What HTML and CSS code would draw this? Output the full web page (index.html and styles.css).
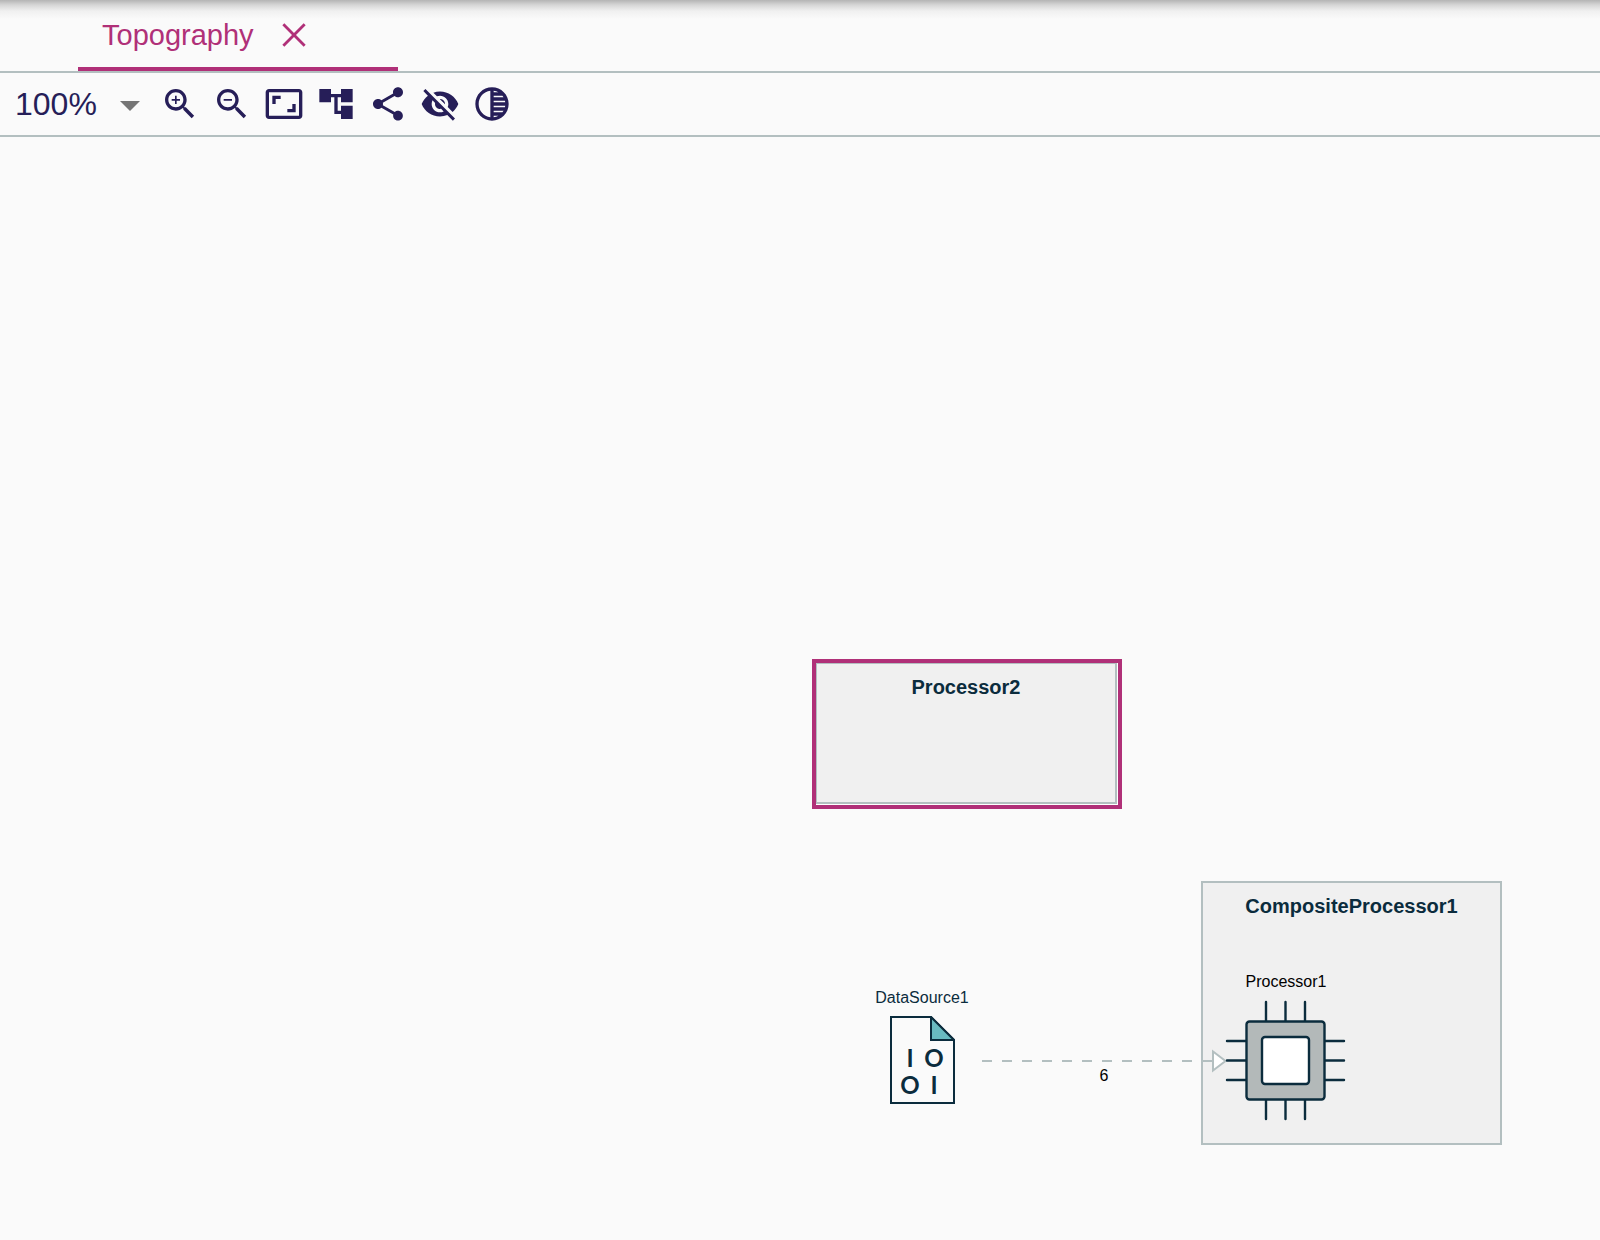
FILE: index.html
```html
<!DOCTYPE html>
<html lang="en">
<head>
  <meta charset="utf-8">
  <title>Topography</title>
  <link rel="stylesheet" href="styles.css">
</head>
<body>
  <div class="workbench">
    <header class="tabs">
      <div class="tab">
        <a class="tab-label" href="#canvas">Topography</a>
        <button class="tab-close" type="button" aria-label="Close tab">
          <svg class="icon" viewBox="0 0 24 24"><path d="M19 6.2 17.8 5 12 10.8 6.2 5 5 6.2 10.8 12 5 17.8 6.2 19 12 13.2 17.8 19 19 17.8 13.2 12z"/></svg>
        </button>
      </div>
    </header>

    <nav class="toolbar" aria-label="Diagram tools">
      <div class="zoom">
        <select class="zoom-select" aria-label="Zoom level">
          <option>50%</option>
          <option selected>100%</option>
          <option>200%</option>
        </select>
        <svg class="zoom-arrow" viewBox="0 0 20 10"><path d="M0 0l10 10L20 0z"/></svg>
      </div>
      <button class="tool" type="button" aria-label="Zoom in">
        <svg class="icon" viewBox="0 0 24 24"><path d="M15.5 14h-.79l-.28-.27C15.41 12.59 16 11.11 16 9.5 16 5.91 13.09 3 9.5 3S3 5.91 3 9.5 5.91 16 9.5 16c1.61 0 3.09-.59 4.23-1.57l.27.28v.79l5 4.99L20.49 19l-4.99-5zm-6 0C7.01 14 5 11.99 5 9.5S7.01 5 9.5 5 14 7.01 14 9.5 11.99 14 9.5 14zm2.5-4h-2v2H9v-2H7V9h2V7h1v2h2v1z"/></svg>
      </button>
      <button class="tool" type="button" aria-label="Zoom out">
        <svg class="icon" viewBox="0 0 24 24"><path d="M15.5 14h-.79l-.28-.27C15.41 12.59 16 11.11 16 9.5 16 5.91 13.09 3 9.5 3S3 5.91 3 9.5 5.91 16 9.5 16c1.61 0 3.09-.59 4.23-1.57l.27.28v.79l5 4.99L20.49 19l-4.99-5zm-6 0C7.01 14 5 11.99 5 9.5S7.01 5 9.5 5 14 7.01 14 9.5 11.99 14 9.5 14zM7 9h5v1H7z"/></svg>
      </button>
      <button class="tool" type="button" aria-label="Fit to screen">
        <svg class="icon" viewBox="0 0 24 24"><path d="M19 12h-2v3h-3v2h5v-5zM7 9h3V7H5v5h2V9zm14-6H3c-1.1 0-2 .9-2 2v14c0 1.1.9 2 2 2h18c1.1 0 2-.9 2-2V5c0-1.1-.9-2-2-2zm0 16.01H3V4.99h18v14.02z"/></svg>
      </button>
      <button class="tool" type="button" aria-label="Arrange all">
        <svg class="icon" viewBox="0 0 24 24"><path d="M22 11V3h-7v3H9V3H2v8h7V8h2v10h4v3h7v-8h-7v3h-2V8h2v3z"/></svg>
      </button>
      <button class="tool" type="button" aria-label="Share">
        <svg class="icon" viewBox="0 0 24 24"><path d="M18 16.08c-.76 0-1.44.3-1.96.77L8.91 12.7c.05-.23.09-.46.09-.7s-.04-.47-.09-.7l7.05-4.11c.54.5 1.25.81 2.04.81 1.66 0 3-1.34 3-3s-1.34-3-3-3-3 1.34-3 3c0 .24.04.47.09.7L8.04 9.81C7.5 9.31 6.79 9 6 9c-1.66 0-3 1.34-3 3s1.34 3 3 3c.79 0 1.5-.31 2.04-.81l7.12 4.16c-.05.21-.08.43-.08.65 0 1.61 1.31 2.92 2.92 2.92 1.61 0 2.92-1.31 2.92-2.92s-1.31-2.92-2.92-2.92z"/></svg>
      </button>
      <button class="tool" type="button" aria-label="Reveal hidden elements">
        <svg class="icon" viewBox="0 0 24 24"><path d="M12 7c2.76 0 5 2.24 5 5 0 .65-.13 1.26-.36 1.83l2.92 2.92c1.51-1.26 2.7-2.89 3.43-4.75-1.73-4.39-6-7.5-11-7.5-1.4 0-2.74.25-3.98.7l2.16 2.16C10.74 7.13 11.35 7 12 7zM2 4.27l2.28 2.28.46.46C3.08 8.3 1.78 10.02 1 12c1.73 4.39 6 7.5 11 7.5 1.55 0 3.03-.3 4.38-.84l.42.42L19.73 22 21 20.73 3.27 3 2 4.27zM7.53 9.8l1.55 1.55c-.05.21-.08.43-.08.65 0 1.66 1.34 3 3 3 .22 0 .44-.03.65-.08l1.55 1.55c-.67.33-1.41.53-2.2.53-2.76 0-5-2.24-5-5 0-.79.2-1.53.53-2.2zm4.31-.78l3.15 3.15.02-.16c0-1.66-1.34-3-3-3l-.17.01z"/></svg>
      </button>
      <button class="tool" type="button" aria-label="Reveal faded elements">
        <svg class="icon" viewBox="0 0 24 24"><path d="M12 2C6.48 2 2 6.48 2 12s4.48 10 10 10 10-4.48 10-10S17.52 2 12 2zm-1 17.93c-3.94-.49-7-3.85-7-7.93s3.05-7.44 7-7.93v15.86zm2-15.86c1.03.13 2 .45 2.87.93H13v-.93zM13 7h5.24c.25.31.48.65.68 1H13V7zm0 3h6.74c.08.33.15.66.19 1H13v-1zm0 9.93V19h2.87c-.87.48-1.84.8-2.87.93zM18.24 17H13v-1h5.92c-.2.35-.43.69-.68 1zm1.5-3H13v-1h6.93c-.04.34-.11.67-.19 1z"/></svg>
      </button>
    </nav>

    <main class="canvas" id="canvas">
      <section class="node processor2">
        <div class="processor2-body">
          <h2 class="container-title">Processor2</h2>
        </div>
      </section>

      <section class="node composite">
        <h2 class="container-title">CompositeProcessor1</h2>
      </section>

      <section class="node data-source">
        <span class="node-label">DataSource1</span>
        <svg class="file" viewBox="0 0 66 90">
          <path class="file-sheet" d="M2 1h40l23 23v63H2z"/>
          <path class="file-fold" d="M42 1v23h23z"/>
          <g class="file-bits">
            <text x="21" y="51">I</text>
            <text x="45" y="51">O</text>
            <text x="21" y="78">O</text>
            <text x="45" y="78">I</text>
          </g>
        </svg>
      </section>

      <div class="node edge">
        <svg class="edge-line" viewBox="0 0 246 24">
          <path d="M0 12h230" stroke-dasharray="10 10"/>
          <path class="edge-head" d="M231 2.500v19l12.500-9.500z"/>
        </svg>
        <span class="edge-label">6</span>
      </div>

      <section class="node processor1">
        <span class="node-label inner-label">Processor1</span>
        <svg class="chip" viewBox="0 0 122 122">
          <path class="chip-pins" d="M41 2v117M60.500 2v117M80 2v117M2 41h117M2 60.500h117M2 80h117"/>
          <rect class="chip-body" x="21.500" y="21.500" width="78" height="78" rx="3"/>
          <rect class="chip-core" x="37" y="37" width="47" height="47" rx="3"/>
        </svg>
      </section>
    </main>
  </div>
</body>
</html>
```
FILE: styles.css
```css
:root {
  --accent: #b03078;
  --navy: #261e58;
  --ink: #0b2c3d;
  --line: #b3bfc0;
  --surface: #fafafa;
  --container: #f0f0f0;
}

* {
  box-sizing: border-box;
}

body {
  margin: 0;
  background: var(--surface);
  font-family: "Liberation Sans", Arial, sans-serif;
}

svg {
  display: block;
}

.workbench {
  display: flex;
  flex-direction: column;
  min-height: 100vh;
}

.tabs {
  display: flex;
  padding-left: 78px;
  border-bottom: 2px solid var(--line);
  background: linear-gradient(#b4b4b4, #d6d6d6 5px, #f0f0f0 11px, var(--surface) 19px);
}

.tab {
  display: flex;
  align-items: center;
  gap: 20px;
  width: 320px;
  height: 71px;
  padding: 2px 0 0 24px;
  border-bottom: 4px solid var(--accent);
}

.tab-label {
  color: var(--accent);
  font-size: 29px;
  line-height: 32px;
  text-decoration: none;
}

.tab-close,
.tool {
  padding: 0;
  border: 0;
  background: none;
  cursor: pointer;
}

.tab-close {
  color: var(--accent);
}

.tool {
  color: var(--navy);
}

.icon {
  width: 40px;
  height: 40px;
  fill: currentColor;
}

.toolbar {
  display: flex;
  align-items: center;
  gap: 12px;
  height: 64px;
  padding-left: 15px;
  border-bottom: 2px solid var(--line);
}

.zoom {
  display: grid;
  align-items: center;
  width: 133px;
}

.zoom-select {
  grid-area: 1 / 1;
  appearance: none;
  width: 100%;
  padding: 0;
  border: 0;
  background: none;
  color: var(--navy);
  font: 32px/40px "Liberation Sans", Arial, sans-serif;
}

.zoom-arrow {
  grid-area: 1 / 1;
  justify-self: end;
  width: 20px;
  height: 10px;
  margin: 4px 8px 0 0;
  fill: #757575;
  pointer-events: none;
}

.canvas {
  position: relative;
  flex: 1;
  overflow: hidden;
}

/* Diagram elements sit at their own coordinates on the free canvas. */
.node {
  position: absolute;
}

.container-title {
  margin: 0;
  color: var(--ink);
  font-size: 20px;
  line-height: 24px;
  text-align: center;
}

.node-label {
  color: var(--ink);
  font-size: 16px;
  line-height: 20px;
}

.processor2 {
  left: 812px;
  top: 522px;
  width: 310px;
  height: 150px;
  padding: 0 1px 1px 0;
  border: 4px solid var(--accent);
  background: #fff;
}

.processor2-body {
  height: 100%;
  padding-top: 11px;
  border: solid var(--line);
  border-width: 1px 2px 2px 1px;
  background: var(--container);
}

.composite {
  left: 1201px;
  top: 744px;
  width: 301px;
  height: 264px;
  padding-top: 11px;
  border: 2px solid var(--line);
  background: var(--container);
}

.data-source {
  left: 862px;
  top: 851px;
  display: flex;
  flex-direction: column;
  align-items: center;
  gap: 8px;
  width: 120px;
}

.file {
  width: 66px;
  height: 90px;
}

.file-sheet,
.file-fold {
  fill: none;
  stroke: var(--ink);
  stroke-width: 2;
}

.file-fold {
  fill: #69bbc1;
}

.file-bits {
  fill: var(--ink);
  font: bold 24px Lato, sans-serif;
  text-anchor: middle;
}

.edge {
  left: 982px;
  top: 912px;
  width: 246px;
  text-align: center;
}

.edge-line {
  width: 246px;
  height: 24px;
  fill: none;
  stroke: var(--line);
  stroke-width: 2;
}

.edge-head {
  fill: #fff;
}

.edge-label {
  display: block;
  margin-top: -5px;
  padding-right: 2px;
  font-size: 16px;
  line-height: 16px;
}

.processor1 {
  left: 1225px;
  top: 835px;
  display: flex;
  flex-direction: column;
  align-items: center;
  gap: 8px;
}

.inner-label {
  color: #000;
}

.chip {
  width: 122px;
  height: 122px;
  stroke: var(--ink);
  stroke-width: 2.4;
}

.chip-pins {
  stroke-linecap: round;
}

.chip-body {
  fill: #b3b9b9;
}

.chip-core {
  fill: #fff;
}
```
